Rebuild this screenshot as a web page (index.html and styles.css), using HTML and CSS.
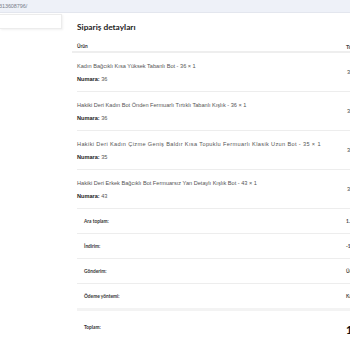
FILE: index.html
```html
<!DOCTYPE html>
<html lang="tr">
<head>
<meta charset="utf-8">
<link rel="stylesheet" href="styles.css">
</head>
<body>
<div class="topbar"><span class="url">313608796/</span></div>
<div class="layout">
  <aside class="sidebar"><div class="sidebox"></div></aside>
  <main class="main">
    <h2 class="title">Sipariş detayları</h2>
    <div class="thead">
      <div class="th">Ürün</div>
      <div class="th val">Toplam</div>
    </div>
    <div class="tbody">
      <div class="item">
        <div class="cell">
          <div class="name">Kadın Bağcıklı Kısa Yüksek Tabanlı Bot - 36 × 1</div>
          <div class="meta"><b>Numara:</b> 36</div>
        </div>
        <div class="val price">399,00₺</div>
      </div>
      <div class="item">
        <div class="cell">
          <div class="name">Hakiki Deri Kadın Bot Önden Fermuarlı Tırtıklı Tabanlı Kışlık - 36 × 1</div>
          <div class="meta"><b>Numara:</b> 36</div>
        </div>
        <div class="val price">399,00₺</div>
      </div>
      <div class="item">
        <div class="cell">
          <div class="name wide">Hakiki Deri Kadın Çizme Geniş Baldır Kısa Topuklu Fermuarlı Klasik Uzun Bot - 35 × 1</div>
          <div class="meta"><b>Numara:</b> 35</div>
        </div>
        <div class="val price">399,00₺</div>
      </div>
      <div class="item">
        <div class="cell">
          <div class="name">Hakiki Deri Erkek Bağcıklı Bot Fermuarsız Yan Detaylı Kışlık Bot - 43 × 1</div>
          <div class="meta"><b>Numara:</b> 43</div>
        </div>
        <div class="val price">399,00₺</div>
      </div>
      <div class="sum">
        <div class="label">Ara toplam:</div>
        <div class="val">1.596,00₺</div>
      </div>
      <div class="sum">
        <div class="label">İndirim:</div>
        <div class="val">-100,00₺</div>
      </div>
      <div class="sum">
        <div class="label">Gönderim:</div>
        <div class="val">Ücretsiz</div>
      </div>
      <div class="sum last">
        <div class="label">Ödeme yöntemi:</div>
        <div class="val">Kapıda ödeme</div>
      </div>
      <div class="sum total">
        <div class="label">Toplam:</div>
        <div class="val big">1.496,00₺</div>
      </div>
    </div>
  </main>
</div>
</body>
</html>
```
FILE: styles.css
```css
html, body {
  margin: 0;
  padding: 0;
  background: #ffffff;
}
body {
  width: 350px;
  height: 350px;
  overflow: hidden;
  font-family: "Liberation Sans", Arial, sans-serif;
  color: #333;
}
.topbar {
  height: 12px;
  background: #eef1f8;
  border-bottom: 1px solid #e3e6ee;
  display: flex;
  align-items: center;
}
.url {
  font-size: 5.5px;
  color: #7a7f8a;
  margin-left: -1px;
  letter-spacing: -0.1px;
}
.layout {
  display: flex;
  width: 420px;
}
.sidebar {
  width: 62px;
  flex: none;
  padding-top: 1px;
}
.sidebox {
  height: 13px;
  border: 1px solid #ececec;
  border-left: none;
  box-shadow: 1px 1px 2px rgba(0,0,0,0.06);
}
.main {
  margin-left: 10px;
  width: 340px;
  flex: none;
}
.title {
  margin: 0;
  padding: 8px 0 0 5px;
  height: 18px;
  font-family: "Lato", sans-serif;
  font-weight: 700;
  font-size: 8.3px;
  line-height: 12px;
  color: #222;
}
.thead {
  display: grid;
  grid-template-columns: 274px 60px;
  border-bottom: 2px solid #eeeeee;
  height: 10px;
  align-items: center;
  margin-top: 2px;
}
.th {
  font-family: "Lato", sans-serif;
  font-weight: 700;
  font-size: 4.8px;
  color: #333;
  padding-left: 5px;
}
.th.val { padding-left: 0; }
.tbody {
  margin-left: 5px;
}
.item {
  display: grid;
  grid-template-columns: 269px 60px;
  align-items: center;
  height: 38px;
  border-bottom: 1px solid #ededed;
}
.cell {
  display: flex;
  flex-direction: column;
  gap: 3px;
}
.name, .meta {
  font-size: 5.6px;
  line-height: 10px;
  color: #555;
  white-space: nowrap;
}
.name.wide { letter-spacing: 0.36px; }
.meta b { color: #222; }
.val {
  font-size: 5.6px;
  color: #444;
  white-space: nowrap;
}
.price { padding-left: 1px; }
.sum {
  display: grid;
  grid-template-columns: 269px 60px;
  align-items: center;
  height: 24px;
  border-bottom: 1px solid #ededed;
}
.label {
  font-family: "Lato", sans-serif;
  font-weight: 700;
  font-size: 4.8px;
  color: #333;
  padding-left: 7px;
}
.sum .val {
  font-family: "Lato", sans-serif;
  font-weight: 700;
  font-size: 4.8px;
}
.sum.last {
  border-bottom: 3px solid #f3f3f3;
}
.sum.total {
  height: 32px;
  border-bottom: none;
}
.sum .val.big {
  font-size: 11px;
  color: #111;
  padding-top: 5px;
}
```
